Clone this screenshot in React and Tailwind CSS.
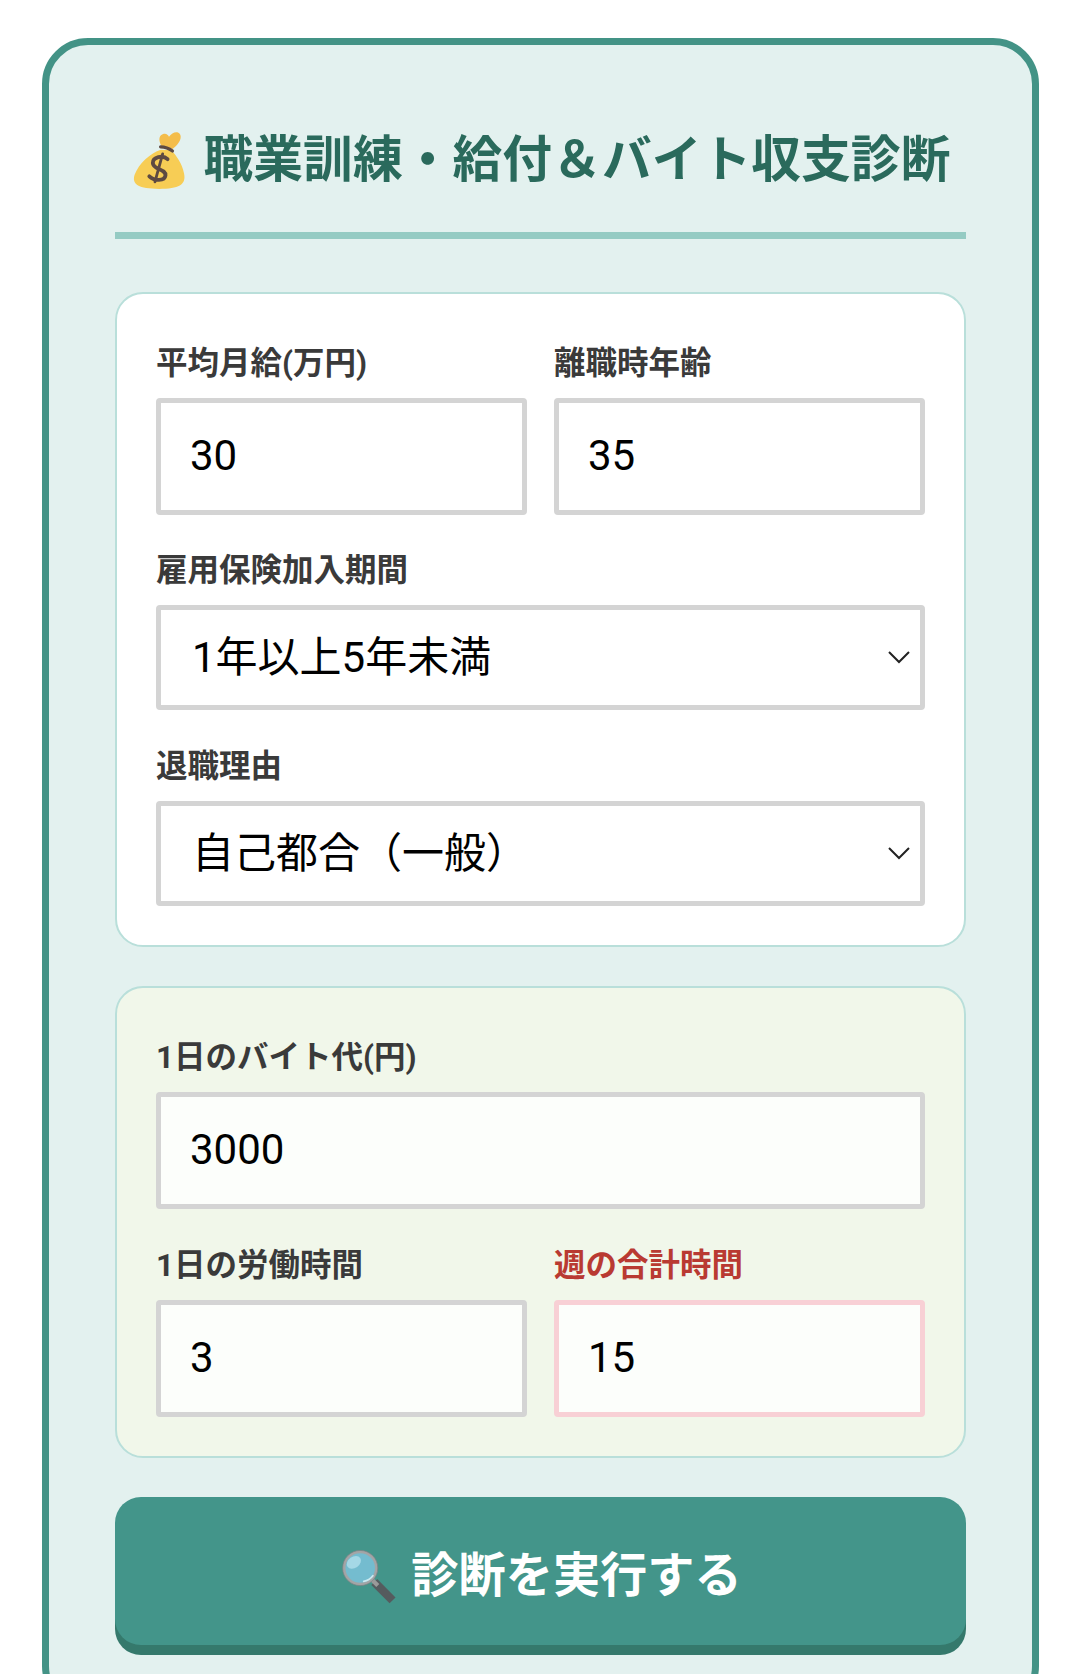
import React from 'react';

const fontStack = { fontFamily: 'Roboto, "Noto Sans CJK JP", sans-serif' };

const MoneyBag = () => (
  <svg width="57" height="61" viewBox="40 30 162 174" className="shrink-0">
    <path d="M125 86 C95 96 62 124 50 158 C41 186 62 198 120 198 C176 198 198 186 191 154 C186 126 168 102 155 88 Z" fill="#f7cd55" />
    <path d="M128 78 C118 62 118 46 130 42 C139 38 145 43 148 49 C156 38 170 32 178 40 C187 50 178 70 158 84 Z" fill="#f4bd4a" />
    <path d="M124 78 C135 78 148 82 158 90" stroke="#5e4a42" strokeWidth="9" fill="none" strokeLinecap="round" />
    <path d="M144 113 C130 100 102 108 102 124 C102 144 140 140 138 160 C136 176 106 176 92 162" stroke="#5e4a42" strokeWidth="11" fill="none" strokeLinecap="round" />
    <path d="M130 98 L108 178" stroke="#5e4a42" strokeWidth="8" fill="none" strokeLinecap="round" />
  </svg>
);

const Magnifier = () => (
  <svg width="60" height="58" viewBox="60 55 170 165" className="shrink-0">
    <path d="M160 152 L212 204" stroke="#555b5e" strokeWidth="24" strokeLinecap="butt" />
    <path d="M154 146 L170 162" stroke="#9a9a9a" strokeWidth="12" />
    <circle cx="120" cy="112" r="46" fill="#74bccf" stroke="#a3a5a6" strokeWidth="8" />
    <circle cx="120" cy="112" r="50" fill="none" stroke="#7d8184" strokeWidth="2" />
    <ellipse cx="102" cy="96" rx="22" ry="16" fill="#a5d8e6" transform="rotate(-35 102 96)" />
    <path d="M130 150 C142 148 150 142 156 134" stroke="#cbe9f0" strokeWidth="5" fill="none" strokeLinecap="round" />
  </svg>
);

const Chevron = () => (
  <svg
    width="24"
    height="14"
    viewBox="0 0 24 14"
    className="absolute right-[14px] top-1/2 -translate-y-1/2 pointer-events-none"
  >
    <path d="M2 2 L12 12 L22 2" fill="none" stroke="#222" strokeWidth="2" />
  </svg>
);

const Field = ({ label, value, labelClass = 'text-[#3a3a3a]', inputClass = 'border-[#d4d4d4] bg-white' }) => (
  <div>
    <label className={`block mb-[9px] leading-[50px] text-[31.5px] font-bold ${labelClass}`}>{label}</label>
    <input
      type="text"
      defaultValue={value}
      className={`block w-full h-[117px] rounded-[4px] border-[5px] pl-[29px] pr-4 pb-[2px] text-[42px] text-black outline-none ${inputClass}`}
    />
  </div>
);

const SelectField = ({ label, value, options, className }) => (
  <div className={className}>
    <label className="block mb-[9px] leading-[50px] text-[31.5px] font-bold text-[#3a3a3a]">{label}</label>
    <div className="relative">
      <select
        defaultValue={value}
        className="block w-full h-[105px] appearance-none rounded-[4px] border-[5px] border-[#d4d4d4] bg-white pl-[31px] pr-16 text-[42px] text-black outline-none"
      >
        {options.map((o) => (
          <option key={o}>{o}</option>
        ))}
      </select>
      <Chevron />
    </div>
  </div>
);

export default function App() {
  return (
    <div className="h-[1674px] overflow-hidden bg-white pt-[38px]" style={fontStack}>
      <div className="ml-[42px] w-[997px] rounded-[46px] border-[7px] border-[#439386] bg-[#e3f1ef] px-[66px] pt-[66px] pb-[60px]">
        <h2 className="flex items-center justify-center gap-[16px] border-b-[7px] border-[#95cbc3] pt-[6px] pb-[29px] mb-[52.5px] h-[128px] text-[49.8px] font-bold text-[#2a6a5c]">
          <MoneyBag />
          <span>職業訓練・給付＆バイト収支診断</span>
        </h2>

        <div className="rounded-[28px] border-2 border-[#b9dfda] bg-white px-[39px] pt-[45px] pb-[39px]">
          <div className="grid grid-cols-2 gap-[27px]">
            <Field label="平均月給(万円)" value="30" />
            <Field label="離職時年齢" value="35" />
          </div>
          <SelectField
            className="mt-[31px]"
            label="雇用保険加入期間"
            value="1年以上5年未満"
            options={['1年未満', '1年以上5年未満', '5年以上10年未満']}
          />
          <SelectField
            className="mt-[32px]"
            label="退職理由"
            value="自己都合（一般）"
            options={['自己都合（一般）', '会社都合']}
          />
        </div>

        <div className="mt-[39px] rounded-[28px] border-2 border-[#b9dfda] bg-[#f1f7ea] px-[39px] pt-[45px] pb-[39px]">
          <Field label="1日のバイト代(円)" value="3000" inputClass="border-[#d4d4d4] bg-[#fcfefb]" />
          <div className="mt-[32px] grid grid-cols-2 gap-[27px]">
            <Field label="1日の労働時間" value="3" inputClass="border-[#d4d4d4] bg-[#fcfefb]" />
            <Field
              label="週の合計時間"
              value="15"
              labelClass="text-[#b93a32]"
              inputClass="border-[#f8d0d5] bg-[#fcfefb]"
            />
          </div>
        </div>

        <button
          type="button"
          className="mt-[39px] flex h-[148px] w-full items-center justify-center gap-[12px] rounded-[26px] bg-[#43958a] pt-[12px] text-[47.2px] font-bold text-white shadow-[0_10px_0_#35796c]"
        >
          <Magnifier />
          <span>診断を実行する</span>
        </button>
      </div>
    </div>
  );
}
